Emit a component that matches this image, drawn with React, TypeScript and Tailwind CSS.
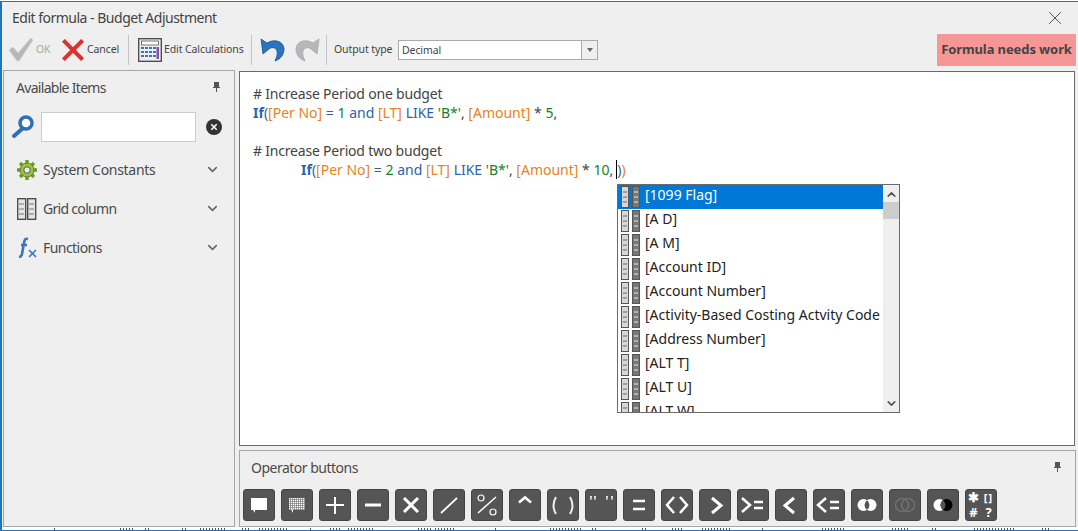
import { ChevronDown, ChevronUp, X } from "lucide-react";
import type { ReactNode } from "react";

const SEGOE = "font-['Noto_Sans',sans-serif]";

// tokens for the formula editor, coloured like the syntax highlighter does
function B({ children }: { children: ReactNode }) {
  return <span className="text-[#e5831c]">{children}</span>;
}
function N({ children }: { children: ReactNode }) {
  return <span className="text-[#12812c]">{children}</span>;
}
function K({ children }: { children: ReactNode }) {
  return <span className="text-[#2f62a8]">{children}</span>;
}

const fields = [
  "[1099 Flag]",
  "[A D]",
  "[A M]",
  "[Account ID]",
  "[Account Number]",
  "[Activity-Based Costing Actvity Code",
  "[Address Number]",
  "[ALT T]",
  "[ALT U]",
  "[ALT W]",
];

// bits of the window behind, showing under the dialog's bottom edge: [left, width]
const behind = [
  [52, 1], [118, 14], [143, 5], [180, 5], [198, 27], [240, 8], [257, 28], [308, 1], [328, 12],
  [346, 27], [416, 14], [433, 20], [493, 1], [548, 32], [590, 6], [640, 4], [670, 12], [700, 30],
  [760, 3], [820, 24], [890, 18], [930, 4], [972, 40], [1040, 8],
];

function Pin() {
  return (
    <svg width="9" height="10" viewBox="0 0 9 10">
      <path d="M2 0h5v5h1v1H1V5h1zM4 6h1v4H4z" fill="#555" />
    </svg>
  );
}

function FieldIcon() {
  return (
    <svg width="20" height="22" viewBox="0 0 20 22" className="shrink-0">
      <rect x="0.5" y="0.5" width="7" height="21" fill="#d8d8d8" stroke="#555" />
      <path d="M2 6h4M2 11h4M2 16h4" stroke="#666" />
      <rect x="11.500" y="0.5" width="7" height="21" fill="#777" stroke="#555" />
      <path d="M13 6h4M13 11h4M13 16h4" stroke="#eee" />
    </svg>
  );
}

const UNDO = "M1 2L3 17L9 12C11 10 16 10 17 14C18 18 16 21 15 24C21 22 24 17 24 12C24 5 15 1 7 6Z";

const opStroke = { stroke: "#fff", fill: "none", strokeLinecap: "butt" as const };
const LENS = "M16 11.130a6 6 0 0 1 0 9.740a6 6 0 0 1 0-9.740z";

const opIcons: ReactNode[] = [
  <path key="a" d="M8 9h16v12H12v3l-2-3H8z" fill="#fff" />,
  <>
    <path
      d="M8 9.750h16M8 11.750h16M8 13.750h16M8 15.750h16M8 17.750h16M8 19.750h16"
      stroke="#fff"
      strokeWidth="1.500"
      strokeDasharray="1.500 .5"
    />
    <path d="M10 20.500h2v3.500z" fill="#fff" />
  </>,
  <path d="M7 16h18M16 8v17" {...opStroke} strokeWidth="2" />,
  <path d="M8 16h16" {...opStroke} strokeWidth="3" />,
  <path d="M9 9l14 14M23 9L9 23" {...opStroke} strokeWidth="3" />,
  <path d="M8 24L24 9" {...opStroke} strokeWidth="1.800" />,
  <>
    <path d="M7 24L25 8" {...opStroke} strokeWidth="1.500" />
    <circle cx="10" cy="9" r="3" {...opStroke} strokeWidth="1.200" />
    <circle cx="22" cy="23" r="3" {...opStroke} strokeWidth="1.200" />
  </>,
  <path d="M10 13.500l6-5 6 5" {...opStroke} strokeWidth="2.500" />,
  <>
    <path d="M9 8q-5 8.500 0 17" {...opStroke} stroke="#eee" strokeWidth="2" />
    <path d="M23 8q5 8.500 0 17" {...opStroke} stroke="#eee" strokeWidth="2" />
  </>,
  <path d="M5 7h2l-.6 4h-1zM9 7h2l-.6 4h-1zM21 7h2l-.6 4h-1zM26 7h2l-.6 4h-1z" fill="#eee" />,
  <path d="M10 12h12M10 20h12" {...opStroke} strokeWidth="2.500" />,
  <path d="M13 8l-7 8 7 8M19 8l7 8-7 8" {...opStroke} strokeWidth="2.500" />,
  <path d="M13 9l9 7.500-9 7.500" {...opStroke} strokeWidth="3" />,
  <>
    <path d="M5 9l8 7-8 7" {...opStroke} strokeWidth="2.500" />
    <path d="M17 13h9M17 19h9" {...opStroke} strokeWidth="2.500" />
  </>,
  <path d="M19 9l-9 7.500 9 7.500" {...opStroke} strokeWidth="3" />,
  <>
    <path d="M13 9l-8 7 8 7" {...opStroke} strokeWidth="2.500" />
    <path d="M17 13h9M17 19h9" {...opStroke} strokeWidth="2.500" />
  </>,
  <>
    <circle cx="12.500" cy="16" r="6" fill="#fff" />
    <circle cx="19.500" cy="16" r="6" fill="#fff" />
    <path d={LENS} fill="#555" />
  </>,
  <>
    <circle cx="13" cy="16" r="6.500" fill="none" stroke="#777" strokeWidth="1.200" />
    <circle cx="19" cy="16" r="6.500" fill="none" stroke="#777" strokeWidth="1.200" />
  </>,
  <>
    <circle cx="12.500" cy="16" r="6" fill="#fff" />
    <circle cx="19.500" cy="16" r="6" fill="#000" />
    <path d={LENS} fill="#555" />
  </>,
];

function OpButton({ children }: { children: ReactNode }) {
  return (
    <div className="h-8 w-8 shrink-0 rounded-[3px] border border-[#444] bg-[#555]">
      <svg width="30" height="30" viewBox="1 1 30 30">
        {children}
      </svg>
    </div>
  );
}

function SideRow({ icon, label, className }: { icon: ReactNode; label: string; className: string }) {
  return (
    <div className="flex h-[39px] items-center pl-[10px] pr-[14px]">
      <div className="flex w-[26px] justify-center">{icon}</div>
      <span className={`ml-[3px] flex-1 text-[14px] text-[#4a4a4a] ${className}`}>{label}</span>
      <ChevronDown size={15} strokeWidth={2.5} className="text-[#666]" />
    </div>
  );
}

function Separator() {
  return <div className="mx-[4px] h-[30px] w-px bg-[#c4c4c4]" />;
}

export default function App() {
  return (
    <div className={`flex h-[531px] w-[1078px] flex-col overflow-hidden bg-[#efefef] ${SEGOE}`}>
      <div className="h-px shrink-0 bg-white" />
      <div className="flex min-h-0 flex-1 flex-col border-b border-l-2 border-t border-[#1f75bd]">
        {/* title */}
        <div className="flex h-[31px] shrink-0 items-center justify-between pl-[10px] pr-[12px]">
          <span className="text-[14px] tracking-[-0.5px] text-[#444]">Edit formula - Budget Adjustment</span>
          <X size={22} strokeWidth={1} className="text-[#444]" />
        </div>

        {/* toolbar */}
        <div className="flex h-[33px] shrink-0 items-center pl-[6px] pr-[2px] text-[10.500px] tracking-[-0.1px] text-[#444]">
          <svg width="26" height="26" viewBox="0 0 26 26">
            <path d="M1 13l4-3 5 6L23 1l2 2L11 24h-2z" fill="#b4b8b8" stroke="#d0d2d2" strokeWidth="1" />
          </svg>
          <span className="ml-[2px] w-[24px] text-[#aaa]">OK</span>
          <svg width="22" height="22" viewBox="0 0 24 24" className="ml-[2px]">
            <path d="M3 3l18 18M21 3L3 21" stroke="#d8332e" strokeWidth="4.400" strokeLinecap="square" />
          </svg>
          <span className="ml-[3px] w-[36px]">Cancel</span>
          <div className="ml-px">
            <Separator />
          </div>
          <svg width="24" height="24" viewBox="0 0 24 24" className="ml-[5px]">
            <rect x="0.700" y="0.700" width="22.600" height="22.600" fill="#eee" stroke="#444" strokeWidth="1.300" />
            <rect x="3.500" y="3" width="17" height="4" fill="#fff" stroke="#555" strokeWidth="0.800" />
            <path
              d="M3 9h3v2H3zM7 9h3v2H7zM11 9h3v2h-3zM3 13h3v2H3zM7 13h3v2H7zM11 13h3v2h-3zM3 17h3v2H3zM7 17h3v2H7zM11 17h3v2h-3zM15 9h3v2h-3zM15 13h3v2h-3zM15 17h3v2h-3z"
              fill="#3f74b8"
            />
            <rect x="18.500" y="9" width="2.500" height="12" fill="#7d54a8" />
          </svg>
          <span className="ml-[2px] w-[83px] whitespace-nowrap">Edit Calculations</span>
          <Separator />
          <svg width="26" height="26" viewBox="0 0 26 26" className="ml-[4px]">
            <path d={UNDO} fill="#2a74c0" stroke="#1c4f8a" strokeWidth="0.800" />
          </svg>
          <svg width="26" height="26" viewBox="0 0 26 26" className="ml-[8px]">
            <path d={UNDO} transform="translate(26 0) scale(-1 1)" fill="#b4b8b8" stroke="#a4a8a8" strokeWidth="0.800" />
          </svg>
          <div className="ml-[2px]">
            <Separator />
          </div>
          <span className="ml-[3px] w-[64px]">Output type</span>
          <div className="flex h-5 w-[200px] border border-[#aaa] bg-white">
            <span className="flex-1 pl-[3px] leading-[18px]">Decimal</span>
            <div className="flex w-4 items-center justify-center border-l border-[#aaa] bg-[#efefef]">
              <div className="h-0 w-0 border-x-[3.500px] border-t-[4px] border-x-transparent border-t-[#666]" />
            </div>
          </div>
          <div className="ml-auto flex h-8 w-[139px] items-center justify-center bg-[#f59797] text-[13px] font-bold tracking-[-0.1px] text-[#444]">
            Formula needs work
          </div>
        </div>

        {/* body */}
        <div className="flex min-h-0 flex-1 pl-px pt-[4px]">
          <aside className="mr-[4px] h-[457px] w-[232px] shrink-0 border border-[#a6a6a6]">
            <div className="flex h-[32px] items-center justify-between pl-3 pr-[13px]">
              <span className="text-[14px] tracking-[-0.7px] text-[#4a4a4a]">Available Items</span>
              <Pin />
            </div>
            <div className="mt-[9px] flex h-[30px] items-center pl-[7px]">
              <svg width="24" height="24" viewBox="0 0 24 24">
                <path d="M11 14L3 21" stroke="#2f6fb8" strokeWidth="4" strokeLinecap="round" />
                <circle cx="15" cy="8" r="6" fill="#fff" stroke="#2f6fb8" strokeWidth="3.500" />
              </svg>
              <div className="ml-[6px] h-[30px] w-[155px] border border-[#ccc] bg-white" />
              <svg width="16" height="16" viewBox="0 0 16 16" className="ml-[10px]">
                <circle cx="8" cy="8" r="8" fill="#333" />
                <path d="M5.300 5.300l5.400 5.400M10.700 5.300l-5.400 5.400" stroke="#fff" strokeWidth="1.600" />
              </svg>
            </div>
            <div className="mt-[8px]">
              <SideRow
                label="System Constants"
                className="tracking-[-0.3px]"
                icon={
                  <svg width="22" height="22" viewBox="0 0 22 22">
                    <path d="M11 1v20M1 11h20M4 4l14 14M18 4L4 18" stroke="#6f9a2a" strokeWidth="3.400" />
                    <circle cx="11" cy="11" r="7" fill="#9ac23c" stroke="#5f7f2a" strokeWidth="1" />
                    <circle cx="11" cy="11" r="3.200" fill="#efefef" stroke="#555" strokeWidth="1" />
                  </svg>
                }
              />
              <SideRow
                label="Grid column"
                className="tracking-[-0.7px]"
                icon={
                  <svg width="20" height="22" viewBox="0 0 20 22">
                    <rect x="0.700" y="0.700" width="8" height="20.600" fill="#e4e4e4" stroke="#444" strokeWidth="1.300" />
                    <rect x="10.700" y="0.700" width="8" height="20.600" fill="#e4e4e4" stroke="#444" strokeWidth="1.300" />
                    <path d="M2 6h5M2 11h5M2 16h5M12 6h5M12 11h5M12 16h5" stroke="#777" />
                  </svg>
                }
              />
              <SideRow
                label="Functions"
                className="tracking-[-0.55px]"
                icon={
                  <svg width="20" height="22" viewBox="0 0 20 22" className="ml-px">
                    <path d="M10 2C7 1 6.500 3 6 6L4 17c-.4 2-1.500 3-3 2.500M3 8h6" fill="none" stroke="#3f74b8" strokeWidth="2.600" />
                    <path d="M11 13l7 7M18 13l-7 7" stroke="#3f74b8" strokeWidth="1.600" />
                  </svg>
                }
              />
            </div>
          </aside>

          <main className="flex min-w-0 flex-1 flex-col pr-[2px] pt-px">
            {/* editor */}
            <div className="relative mr-px h-[375px] shrink-0 border border-[#6a6a6a] bg-white pl-[13px] pt-[12px] text-[14px] leading-[19px] text-[#444]">
              <div className="tracking-[-0.2px]"># Increase Period one budget</div>
              <div className="whitespace-pre">
                <span className="font-bold text-[#2f62a8]">If</span><K>(</K><B>[Per No]</B> <K>=</K> <N>1</N> <K>and</K> <B>[LT]</B> <K>LIKE</K> <N>'B*'</N>, <B>[Amount]</B> * <N>5</N>,
              </div>
              <div className="h-[19px]" />
              <div className="tracking-[-0.2px]"># Increase Period two budget</div>
              <div className="whitespace-pre pl-[48px]">
                <span className="font-bold text-[#2f62a8]">If</span><K>(</K><B>[Per No]</B> <K>=</K> <N>2</N> <K>and</K> <B>[LT]</B> <K>LIKE</K> <N>'B*'</N>, <B>[Amount]</B> * <N>10</N>,<span className="ml-[3px] border-l border-black text-[#2f62a8]">)</span><B>)</B>
              </div>

              {/* autocomplete */}
              <div className="absolute left-[377px] top-[112px] flex h-[229px] w-[283px] overflow-hidden border border-[#6a6a6a] bg-white font-['DejaVu_Sans',sans-serif] text-[14px] text-[#222]">
                <div className="min-w-0 flex-1">
                  {fields.map((f, i) => (
                    <div
                      key={f}
                      className={`flex h-6 items-center whitespace-nowrap pl-[3px] ${
                        i === 0 ? "bg-[#0078d7] text-white" : ""
                      }`}
                    >
                      <FieldIcon />
                      <span className="mb-[5px] ml-[4px]">{f}</span>
                    </div>
                  ))}
                </div>
                <div className="flex w-[16px] shrink-0 flex-col items-center bg-[#efefef] text-[#555]">
                  <ChevronUp size={13} strokeWidth={3} className="mt-[3px]" />
                  <div className="mt-px h-[17px] w-full bg-[#cdcdcd]" />
                  <ChevronDown size={13} strokeWidth={3} className="mb-[2px] mt-auto" />
                </div>
              </div>
            </div>

            {/* operators */}
            <div className="mt-[4px] flex h-[77px] shrink-0 flex-col border border-[#a6a6a6]">
              <div className="mb-[6px] flex h-[32px] items-center justify-between pl-[11px] pr-[13px]">
                <span className="text-[14px] tracking-[-0.5px] text-[#4a4a4a]">Operator buttons</span>
                <Pin />
              </div>
              <div className="flex gap-[6px] pl-[3px]">
                {opIcons.map((icon, i) => (
                  <OpButton key={i}>{icon}</OpButton>
                ))}
                <div className="grid h-8 w-8 shrink-0 grid-cols-2 rounded-[3px] border border-[#444] bg-[#555] text-center font-['DejaVu_Sans',sans-serif] text-[13px] font-bold leading-[15px] text-white">
                  <span>✱</span>
                  <span className="text-[11px] tracking-[1px]">[]</span>
                  <span>#</span>
                  <span>?</span>
                </div>
              </div>
            </div>
          </main>
        </div>

        {/* window behind the dialog */}
        <div className="relative h-[3px] shrink-0 bg-white">
          {behind.map(([left, width]) => (
            <div
              key={left}
              className="absolute bottom-0 h-[2px] bg-[repeating-linear-gradient(90deg,#555_0_1px,transparent_1px_3px)]"
              style={{ left, width }}
            />
          ))}
        </div>
      </div>
    </div>
  );
}
